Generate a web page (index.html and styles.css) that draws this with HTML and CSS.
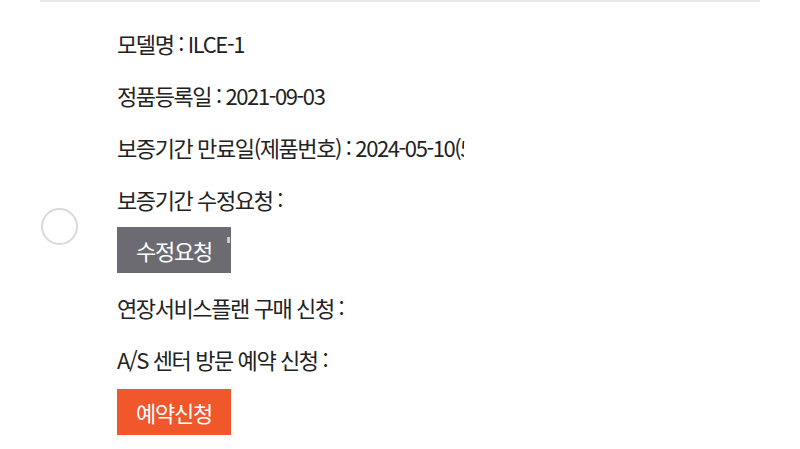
FILE: index.html
```html
<!DOCTYPE html>
<html lang="ko">
<head>
<meta charset="utf-8">
<link rel="stylesheet" href="styles.css">
</head>
<body>
<div class="panel">
  <div class="row-wrap">
    <div class="radio-col"><span class="radio"></span></div>
    <div class="info">
      <p class="line">모델명 : ILCE-1</p>
      <p class="line">정품등록일 : 2021-09-03</p>
      <p class="line">보증기간 만료일(제품번호) : 2024-05-10(<span class="redact-wrap">5<span class="redact"></span></span></p>
      <p class="line">보증기간 수정요청 :</p>
      <button class="btn btn-gray">수정요청<span class="mark"></span></button>
      <p class="line">연장서비스플랜 구매 신청 :</p>
      <p class="line">A/S 센터 방문 예약 신청 :</p>
      <button class="btn btn-orange">예약신청</button>
    </div>
  </div>
</div>
</body>
</html>
```

FILE: styles.css
```css
html, body {
  margin: 0;
  padding: 0;
  background: #fff;
}
body {
  width: 800px;
  height: 449px;
  overflow: hidden;
  font-family: "Noto Sans CJK KR", "Noto Sans", sans-serif;
  color: #222;
}
.panel {
  margin: 0 40px;
  border-top: 2px solid #e9e9e9;
}
.row-wrap {
  display: flex;
  align-items: center;
}
.radio-col {
  width: 76px;
  display: flex;
  justify-content: flex-start;
  padding-left: 1px;
}
.radio {
  display: block;
  width: 37px;
  height: 37px;
  border: 2px solid #d9d9d9;
  border-radius: 50%;
  box-sizing: border-box;
  margin-top: 16px;
}
.info {
  padding-top: 15px;
  display: flex;
  flex-direction: column;
  align-items: flex-start;
}
.line {
  margin: 0;
  height: 52px;
  line-height: 52px;
  font-size: 22px;
  letter-spacing: -1.4px;
  white-space: nowrap;
}
.redact-wrap {
  position: relative;
}
.redact {
  position: absolute;
  left: 4px;
  top: 6px;
  width: 90px;
  height: 40px;
  background: #fff;
  border-radius: 6px;
}
.btn {
  position: relative;
  width: 114px;
  height: 46px;
  border: none;
  padding: 0;
  font-family: "Noto Sans CJK KR", "Noto Sans", sans-serif;
  font-size: 22px;
  letter-spacing: -1.2px;
  color: #fff;
  margin-top: 2px;
}
.btn-gray {
  background: #6c6b71;
  margin-bottom: 8px;
}
.btn-orange {
  background: #f0572b;
  margin-top: 4px;
}
.mark {
  position: absolute;
  right: 1px;
  top: 10px;
  width: 3px;
  height: 6px;
  background: #c8c8cc;
}
```
